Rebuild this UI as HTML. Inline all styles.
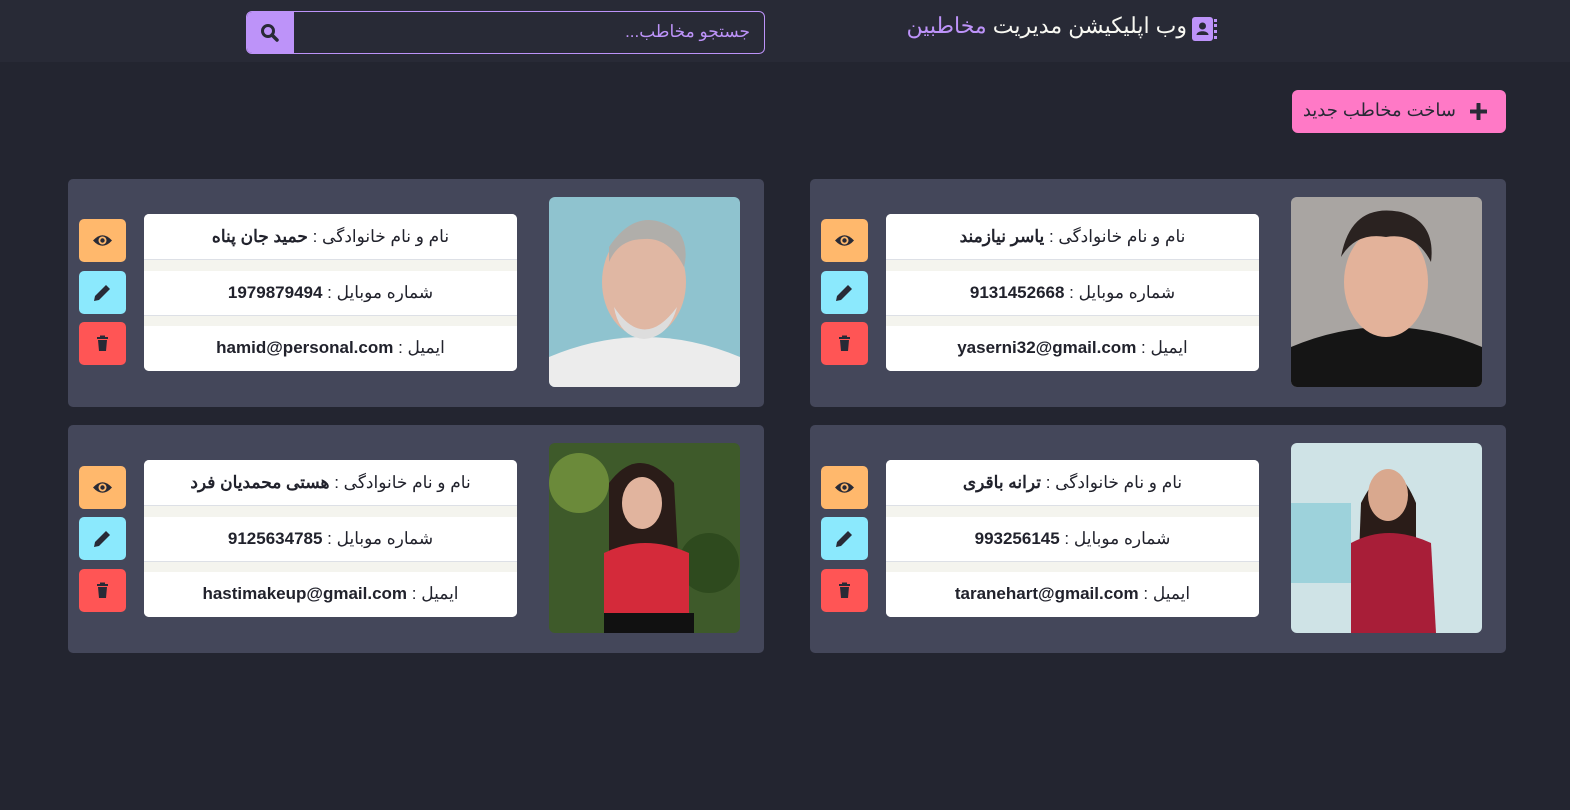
<!DOCTYPE html>
<html><head><meta charset="utf-8"><style>
*{box-sizing:border-box;margin:0;padding:0}
body{width:1570px;height:810px;background:#232530;font-family:"Liberation Sans","Noto Sans CJK SC",sans-serif;position:relative;overflow:hidden}
.hdr{position:absolute;left:0;top:0;width:1570px;height:62px;background:#282a36}
.title{position:absolute;right:383px;top:13px;font-size:22px;color:#f8f8f2;direction:rtl;white-space:nowrap}
.title b{font-weight:normal;color:#bd93f9}
.ico{position:absolute;left:1192px;top:17px;width:21px;height:24px;background:#bd93f9;border-radius:3px}
.search{position:absolute;left:246px;top:11px;width:519px;height:43px;border:1px solid #bd93f9;border-radius:6px;overflow:hidden}
.search .btn{position:absolute;left:0;top:0;width:47px;height:43px;background:#bd93f9}
.search span{position:absolute;right:14px;top:10px;font-size:17px;color:#bd93f9;direction:rtl}
.new{position:absolute;left:1292px;top:90px;width:214px;height:43px;background:#ff79c6;border-radius:6px;color:#282a36;font-size:18px;direction:rtl}
.new span{position:absolute;right:50px;top:10px}
.card{position:absolute;width:696px;height:228px;background:#44475a;border-radius:5px}
.img{position:absolute;left:481px;top:18px;width:191px;height:190px;border-radius:6px;overflow:hidden}
.list{position:absolute;left:76px;top:35px;width:373px;height:157px;background:#f4f4ee;border-radius:5px;overflow:hidden}
.row{position:absolute;left:0;width:373px;background:#fff;text-align:center;font-size:17px;color:#21222c;direction:rtl;border-bottom:1px solid #dde0e6}
.b{position:absolute;left:11px;width:47px;height:43px;border-radius:5px}
.b svg{position:absolute;left:13px;top:11px}
</style></head><body>
<div class="hdr">
<div class="title">وب اپلیکیشن مدیریت <b>مخاطبین</b></div>
<div class="ico"><svg width="21" height="24"><circle cx="10.5" cy="9" r="3.5" fill="#282a36"/><path d="M4.5 18c0-5 12-5 12 0z" fill="#282a36"/></svg></div>
<div style="position:absolute;left:1214px;top:19px;width:3px;height:20px;border-left:3px dotted #bd93f9"></div>
<div class="search"><div class="btn"><svg width="47" height="43"><circle cx="21" cy="19" r="5.5" stroke="#282a36" stroke-width="3" fill="none"/><line x1="25" y1="23" x2="30" y2="28" stroke="#282a36" stroke-width="3.5" stroke-linecap="round"/></svg></div><span>جستجو مخاطب...</span></div>
</div>
<div class="new"><svg style="position:absolute;left:178px;top:13px" width="17" height="17"><path d="M8.5 1v15M1 8.5h15" stroke="#282a36" stroke-width="4" stroke-linecap="round"/></svg><span>ساخت مخاطب جدید</span></div>

<div class="card" style="left:810px;top:179px">
<div class="img"><svg width="191" height="190"><rect width="191" height="190" fill="#d8d6d2"/><rect width="191" height="190" fill="#3a3635" opacity=".3"/><path d="M0 150 Q95 110 191 150 V190 H0z" fill="#151515"/><ellipse cx="95" cy="85" rx="42" ry="55" fill="#e3b29a"/><path d="M50 60 Q60 5 110 15 Q145 25 140 65 Q125 35 95 40 Q65 35 50 60z" fill="#2a2220"/></svg></div>
<div class="list"><div class="row" style="top:0;height:46px;line-height:46px">نام و نام خانوادگی : <b>یاسر نیازمند</b></div><div class="row" style="top:57px;height:45px;line-height:44px">شماره موبایل : <b>9131452668</b></div><div class="row" style="top:112px;height:45px;line-height:44px;border:0">ایمیل : <b>yaserni32@gmail.com</b></div></div>
<div class="b" style="top:40px;background:#ffb86c"><svg width="21" height="21"><path d="M1 10.5Q10.5 0 20 10.5Q10.5 21 1 10.5z" fill="#282a36"/><circle cx="10.5" cy="10.5" r="4" fill="#ffb86c"/><circle cx="10.5" cy="10.5" r="2.2" fill="#282a36"/></svg></div>
<div class="b" style="top:92px;background:#8be9fd"><svg width="21" height="21"><path d="M2 19l1-5L14 3l4 4L7 18z" fill="#282a36"/></svg></div>
<div class="b" style="top:143px;background:#ff5555"><svg width="21" height="21"><path d="M5 4h11v2H5zM8 2.5h5V4H8zM6 7h9l-1 11H7z" fill="#282a36"/></svg></div>
</div>

<div class="card" style="left:68px;top:179px">
<div class="img"><svg width="191" height="190"><rect width="191" height="190" fill="#8fc3cf"/><path d="M0 160 Q95 120 191 160 V190 H0z" fill="#ececec"/><ellipse cx="95" cy="85" rx="42" ry="55" fill="#e0b7a3"/><path d="M60 50 Q90 5 130 35 Q140 50 135 70 Q120 40 95 42 Q70 42 60 65z" fill="#b0aeaa"/><path d="M65 110 Q95 155 128 110 Q120 140 95 142 Q70 140 65 110z" fill="#ddd"/></svg></div>
<div class="list"><div class="row" style="top:0;height:46px;line-height:46px">نام و نام خانوادگی : <b>حمید جان پناه</b></div><div class="row" style="top:57px;height:45px;line-height:44px">شماره موبایل : <b>1979879494</b></div><div class="row" style="top:112px;height:45px;line-height:44px;border:0">ایمیل : <b>hamid@personal.com</b></div></div>
<div class="b" style="top:40px;background:#ffb86c"><svg width="21" height="21"><path d="M1 10.5Q10.5 0 20 10.5Q10.5 21 1 10.5z" fill="#282a36"/><circle cx="10.5" cy="10.5" r="4" fill="#ffb86c"/><circle cx="10.5" cy="10.5" r="2.2" fill="#282a36"/></svg></div>
<div class="b" style="top:92px;background:#8be9fd"><svg width="21" height="21"><path d="M2 19l1-5L14 3l4 4L7 18z" fill="#282a36"/></svg></div>
<div class="b" style="top:143px;background:#ff5555"><svg width="21" height="21"><path d="M5 4h11v2H5zM8 2.5h5V4H8zM6 7h9l-1 11H7z" fill="#282a36"/></svg></div>
</div>

<div class="card" style="left:810px;top:425px">
<div class="img"><svg width="191" height="190"><rect width="191" height="190" fill="#cfe3e6"/><rect x="0" y="60" width="60" height="80" fill="#7cc6d4" opacity=".6"/><path d="M70 60 Q100 0 125 60 V190 H65z" fill="#2a1c18"/><ellipse cx="97" cy="52" rx="20" ry="26" fill="#d9a88e"/><path d="M60 100 Q97 80 140 100 L145 190 H60z" fill="#a81e38"/></svg></div>
<div class="list"><div class="row" style="top:0;height:46px;line-height:46px">نام و نام خانوادگی : <b>ترانه باقری</b></div><div class="row" style="top:57px;height:45px;line-height:44px">شماره موبایل : <b>993256145</b></div><div class="row" style="top:112px;height:45px;line-height:44px;border:0">ایمیل : <b>taranehart@gmail.com</b></div></div>
<div class="b" style="top:41px;background:#ffb86c"><svg width="21" height="21"><path d="M1 10.5Q10.5 0 20 10.5Q10.5 21 1 10.5z" fill="#282a36"/><circle cx="10.5" cy="10.5" r="4" fill="#ffb86c"/><circle cx="10.5" cy="10.5" r="2.2" fill="#282a36"/></svg></div>
<div class="b" style="top:92px;background:#8be9fd"><svg width="21" height="21"><path d="M2 19l1-5L14 3l4 4L7 18z" fill="#282a36"/></svg></div>
<div class="b" style="top:144px;background:#ff5555"><svg width="21" height="21"><path d="M5 4h11v2H5zM8 2.5h5V4H8zM6 7h9l-1 11H7z" fill="#282a36"/></svg></div>
</div>

<div class="card" style="left:68px;top:425px">
<div class="img"><svg width="191" height="190"><rect width="191" height="190" fill="#3e5a2a"/><circle cx="30" cy="40" r="30" fill="#6b8a3a"/><circle cx="160" cy="120" r="30" fill="#2e4a1e"/><path d="M60 40 Q90 0 125 40 L130 130 H60z" fill="#2a1c18"/><ellipse cx="93" cy="60" rx="20" ry="26" fill="#e1b49e"/><path d="M55 110 Q95 90 140 110 L140 170 H55z" fill="#d42a3a"/><rect x="55" y="170" width="90" height="20" fill="#111"/></svg></div>
<div class="list"><div class="row" style="top:0;height:46px;line-height:46px">نام و نام خانوادگی : <b>هستی محمدیان فرد</b></div><div class="row" style="top:57px;height:45px;line-height:44px">شماره موبایل : <b>9125634785</b></div><div class="row" style="top:112px;height:45px;line-height:44px;border:0">ایمیل : <b>hastimakeup@gmail.com</b></div></div>
<div class="b" style="top:41px;background:#ffb86c"><svg width="21" height="21"><path d="M1 10.5Q10.5 0 20 10.5Q10.5 21 1 10.5z" fill="#282a36"/><circle cx="10.5" cy="10.5" r="4" fill="#ffb86c"/><circle cx="10.5" cy="10.5" r="2.2" fill="#282a36"/></svg></div>
<div class="b" style="top:92px;background:#8be9fd"><svg width="21" height="21"><path d="M2 19l1-5L14 3l4 4L7 18z" fill="#282a36"/></svg></div>
<div class="b" style="top:144px;background:#ff5555"><svg width="21" height="21"><path d="M5 4h11v2H5zM8 2.5h5V4H8zM6 7h9l-1 11H7z" fill="#282a36"/></svg></div>
</div>
</body></html>
